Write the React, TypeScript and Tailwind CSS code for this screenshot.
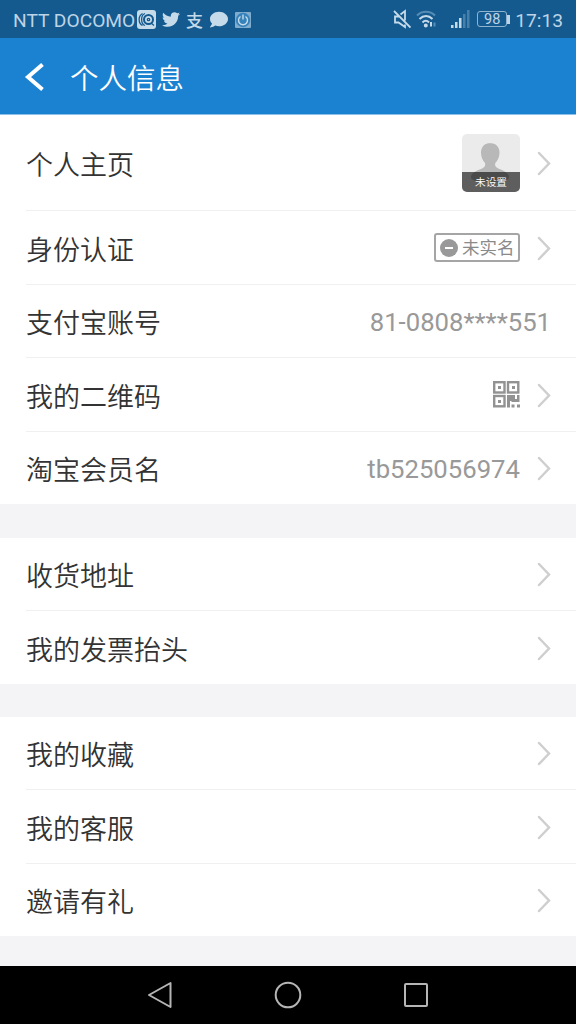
import type { ReactNode } from "react";
import { FaComment, FaTwitter } from "react-icons/fa";

type Item = { label: string; height: string; value?: ReactNode; arrow?: boolean };

function Chevron() {
  return (
    <svg className="ml-[16px] h-[26px] w-[15px] shrink-0" viewBox="0 0 15 26" fill="none" stroke="#cfcfcf" strokeWidth="2.5" strokeLinecap="round">
      <path d="M3 3 L13 13.500 L3 24" />
    </svg>
  );
}

function Avatar() {
  return (
    <div className="relative h-[58px] w-[58px] overflow-hidden rounded-[5px] bg-[#ebebeb]">
      <svg className="h-[58px] w-[58px]" viewBox="0 0 58 58" fill="#b8b8b8">
        <path d="M28.500 9c-6 0-9.700 4-9.500 10 .1 4.500 1.800 7.500 4 10 .8 3-.5 4.500-4 6C13.500 37 9 39.500 9 43c0 3.500 5 5 19 5s19-1.500 19-5c0-3.500-4.500-6-9.500-8-3.500-1.500-5-3-4.200-6 2.400-2.500 4.100-5.500 4.200-10 .2-6-3.500-10-10-10z" />
      </svg>
      <div className="absolute inset-x-0 bottom-0 flex h-[20px] items-center justify-center bg-black/60 pt-[3px] text-[10.700px] font-[350] leading-none text-white">未设置</div>
    </div>
  );
}

function UnverifiedTag() {
  return (
    <span className="flex h-[29px] w-[86px] items-center rounded-[3px] border-2 border-[#a5a5a5] pl-[4px] text-[17.500px] leading-none text-[#8a8a8a]">
      <svg className="mr-[4px] h-[18px] w-[18px] shrink-0" viewBox="0 0 18 18">
        <circle cx="9" cy="9" r="9" fill="#999" />
        <path d="M5 9h8" stroke="#fff" strokeWidth="2" />
      </svg>
      <span className="whitespace-nowrap pt-[3px]">未实名</span>
    </span>
  );
}

function QrIcon() {
  return (
    <svg className="h-[27px] w-[27px]" viewBox="0 0 27 27" fill="#929292">
      <g fill="none" stroke="#929292" strokeWidth="2.4">
        <rect x="1.200" y="1.200" width="10.300" height="10.300" />
        <rect x="15" y="1.200" width="10.300" height="10.300" />
        <rect x="1.200" y="15" width="10.300" height="10.300" />
      </g>
      <path d="M5 5h3v3H5zM19 5h3v3h-3zM5 19h3v3H5zM14 14h8v4h2v-4h2.500v7h-8v-1H17v6.500h-3zM18.500 23.500h3v3h-3zM24 23.500h3v3h-3z" />
    </svg>
  );
}

const groups: Item[][] = [
  [
    { label: "个人主页", height: "h-[96px]", value: <Avatar />, arrow: true },
    { label: "身份认证", height: "h-[74px]", value: <UnverifiedTag />, arrow: true },
    { label: "支付宝账号", height: "h-[73px]", value: "81-0808****551" },
    { label: "我的二维码", height: "h-[74px]", value: <QrIcon />, arrow: true },
    { label: "淘宝会员名", height: "h-[72px]", value: "tb525056974", arrow: true },
  ],
  [
    { label: "收货地址", height: "h-[73px]", arrow: true },
    { label: "我的发票抬头", height: "h-[73px]", arrow: true },
  ],
  [
    { label: "我的收藏", height: "h-[73px]", arrow: true },
    { label: "我的客服", height: "h-[74px]", arrow: true },
    { label: "邀请有礼", height: "h-[72px]", arrow: true },
  ],
];

function Row({ label, height, value, arrow }: Item) {
  return (
    <div className={`flex items-center justify-between border-b border-[#f0f0f0] pr-[25px] last:border-b-0 ${height}`}>
      <span className="pt-[7px] text-[27px] font-[350] leading-none text-[#333]">{label}</span>
      <div className="flex items-center">
        {typeof value === "string" ? (
          <span className="pt-[3px] text-[25.700px] leading-none text-[#999]">{value}</span>
        ) : value}
        {arrow && <Chevron />}
      </div>
    </div>
  );
}

function StatusBar() {
  return (
    <div className="flex h-[38px] items-center bg-[#145a8f] px-[13px] pt-px text-[#bdd4e6]">
      <span className="w-[124px] whitespace-nowrap pt-[2px] text-[19.200px] leading-none">NTT DOCOMO</span>
      <svg className="h-[19px] w-[19px]" viewBox="0 0 19 19" fill="none">
        <rect width="19" height="19" rx="3" fill="#c6dbea" />
        <g stroke="#145a8f" strokeWidth="1.300">
          <circle cx="11.500" cy="9.500" r="4.500" strokeWidth="2" />
          <circle cx="11.500" cy="9.500" r="1.200" />
          <path d="M14 13l3 2.500M8 3.500C3.500 5 3.500 14 8 15.500M5.500 3.500C1 6 1 13 5.500 15.500" />
        </g>
      </svg>
      <FaTwitter className="ml-[6px] h-[19px] w-[18px] text-[#c6dbea]" />
      <span className="ml-[6px] w-[19px] pt-[3px] text-[17px] font-medium leading-none text-[#c6dbea]">支</span>
      <FaComment className="ml-[5px] h-[19px] w-[18px] text-[#c6dbea]" />
      <svg className="ml-[7px] h-[16px] w-[16px]" viewBox="0 0 16 16" fill="none">
        <rect width="16" height="16" rx="1" fill="#80adcd" />
        <circle cx="8" cy="8" r="7.200" fill="#3682bb" />
        <path d="M5.500 4.500a4.500 4.500 0 1 0 5 0M8 2.500v5" stroke="#c6dbea" strokeWidth="1.400" />
      </svg>
      <div className="ml-auto flex items-center">
        <svg className="h-[20px] w-[18px]" viewBox="0 0 18 20" fill="none" stroke="#c6dbea" strokeWidth="1.800">
          <path d="M6 7.500H2v6h3.500l6.500 4.500v-2.500M7.500 5.500L12 2v9.500M1 2l16.500 16.500" />
        </svg>
        <svg className="ml-[5px] h-[18px] w-[20px]" viewBox="0 0 20 18" fill="none" stroke="#c6dbea" strokeWidth="2">
          <path d="M1 5.500c5-5 13-5 18 0" stroke="#568db5" />
          <path d="M3.500 9c4-4 9-4 13 0M6.500 12.500c2.200-2.200 4.500-2.200 6.500 0" />
          <circle cx="9.800" cy="15.500" r="1" />
          <path d="M15 12v4.500" />
          <path d="M18.500 12.500v4" stroke="#568db5" />
        </svg>
        <svg className="ml-[15px] h-[18px] w-[19px]" viewBox="0 0 19 18" fill="#c6dbea">
          <path d="M0 15h2.500v3H0zM4 12h2.500v6H4zM8 8h2.500v10H8z" />
          <path d="M12 4h2.500v14H12zM16 0h2.500v18H16z" fill="#4680aa" />
        </svg>
        <span className="ml-[7px] flex h-[16px] w-[30px] items-center justify-center rounded-[3px] border border-[#8eb4d0] pt-[2px] text-[14.500px] leading-none">98</span>
        <span className="h-[9px] w-[3px] bg-[#bdd4e6]" />
        <span className="ml-[5px] pt-[2px] text-[19.200px] leading-none">17:13</span>
      </div>
    </div>
  );
}

export default function App() {
  return (
    <div className="flex h-[1024px] w-[576px] flex-col overflow-hidden bg-[#f4f4f7] font-[Roboto,'Noto_Sans_CJK_SC',sans-serif]">
      <StatusBar />
      <header className="flex h-[77px] items-center border-b border-[#8dc0e8] bg-[#1b82d2] pl-[24px] text-white">
        <svg className="mt-px h-[28px] w-[20px]" viewBox="0 0 20 28" fill="none" stroke="currentColor" strokeWidth="4">
          <path d="M18.500 1.500L4 14l14.500 12.500" />
        </svg>
        <h1 className="ml-[26px] pt-[8px] text-[28.500px] font-[350] leading-none">个人信息</h1>
      </header>
      <main className="flex flex-col">
        {groups.map((items, i) => (
          <section key={items[0].label} className={`bg-white pl-[26px] ${i === 1 ? "mt-[34px] mb-[33px]" : ""}`}>
            {items.map((item) => <Row key={item.label} {...item} />)}
          </section>
        ))}
      </main>
      <nav className="mt-auto flex h-[58px] items-center bg-black pl-[147px]">
        <svg className="h-[28px] w-[26px]" viewBox="0 0 26 28" fill="none" stroke="#b5b5b5" strokeWidth="2" strokeLinejoin="round">
          <path d="M2 14L23.500 2v24z" />
        </svg>
        <svg className="ml-[101px] h-[28px] w-[28px]" viewBox="0 0 28 28" fill="none" stroke="#b5b5b5" strokeWidth="2">
          <circle cx="14" cy="14" r="12.300" />
        </svg>
        <svg className="ml-[101px] h-[26px] w-[26px]" viewBox="0 0 26 26" fill="none" stroke="#b5b5b5" strokeWidth="2">
          <rect x="2" y="2" width="22" height="22" rx="1" />
        </svg>
      </nav>
    </div>
  );
}
